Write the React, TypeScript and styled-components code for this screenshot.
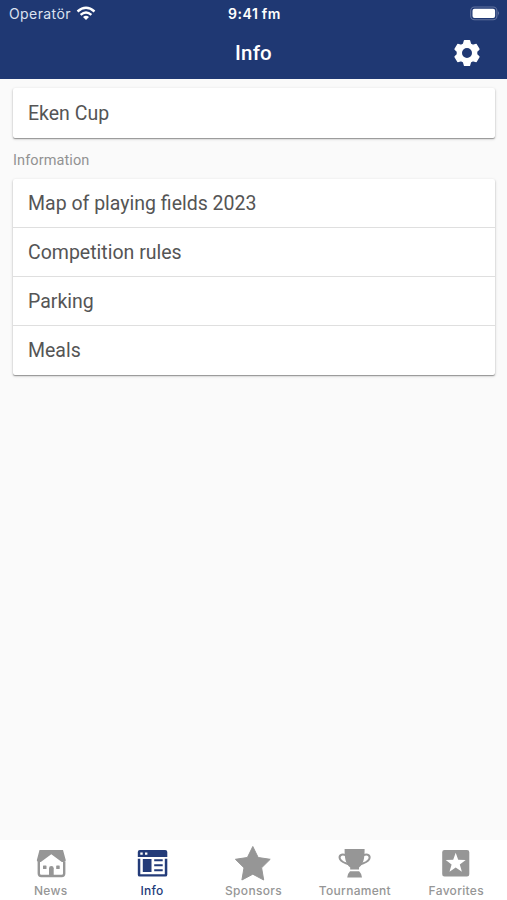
import React from "react";
import styled, { createGlobalStyle } from "styled-components";

const GlobalStyle = createGlobalStyle`
  * { box-sizing: border-box; }
  body { margin: 0; background: #fafafa; }
`;

const Screen = styled.div`
  width: 100%;
  height: 100vh;
  display: flex;
  flex-direction: column;
  background: #fafafa;
  font-family: Roboto, "Liberation Sans", sans-serif;
`;

const Header = styled.header`
  height: 79px;
  flex: none;
  background: #1f3873;
  color: #fff;
`;

const StatusBar = styled.div`
  height: 27px;
  padding: 0 7px 0 9px;
  display: grid;
  grid-template-columns: 1fr auto 1fr;
  align-items: center;
  font-family: Inter, sans-serif;
  font-size: 14px;
  line-height: 27px;
`;

const Carrier = styled.div`
  display: flex;
  align-items: center;
  gap: 5px;
  color: #dce2f0;
  letter-spacing: 0.4px;
`;

const Clock = styled.div`
  font-size: 14px;
  font-weight: 600;
  letter-spacing: 0.5px;
  word-spacing: -0.5px;
`;

const Battery = styled.svg`
  justify-self: end;
`;

const TitleBar = styled.div`
  height: 52px;
  padding: 0 26px;
  display: grid;
  grid-template-columns: 1fr auto 1fr;
  align-items: center;
`;

const Title = styled.h1`
  grid-column: 2;
  margin: 0;
  font-size: 20.5px;
  font-weight: 500;
  line-height: 50px;
  letter-spacing: 0.2px;
`;

const SettingsButton = styled.button`
  justify-self: end;
  display: flex;
  padding: 0;
  border: 0;
  background: none;
  color: #fff;
  margin-bottom: 1px;
`;

const Content = styled.main`
  flex: 1;
  padding: 9px 12px 0 13px;
`;

const Card = styled.section`
  background: #fff;
  border-radius: 2px;
  box-shadow: 0 1px 1px rgba(0, 0, 0, 0.3), 0 1px 3px rgba(0, 0, 0, 0.22);
`;

const Row = styled.div`
  height: 49px;
  padding: 0 15px;
  color: #555;
  font-size: 19.5px;
  line-height: 49px;
  border-bottom: 1px solid #dfdfdf;

  &:last-child {
    border-bottom: 0;
  }
`;

const LeadRow = styled(Row)`
  height: 50px;
  line-height: 51px;
`;

const SectionLabel = styled.h2`
  height: 41px;
  margin: 0;
  color: #929292;
  font-size: 14.5px;
  font-weight: 400;
  line-height: 45px;
  letter-spacing: 0.1px;
`;

const TabBar = styled.nav`
  height: 60px;
  flex: none;
  display: grid;
  grid-template-columns: repeat(5, 1fr);
  background: #fff;
`;

const Tab = styled.div<{ $active?: boolean }>`
  display: flex;
  flex-direction: column;
  align-items: center;
  padding-top: 4px;
  color: ${(p) => (p.$active ? "#233b79" : "#969696")};
`;

const TabLabel = styled.span`
  font-family: Inter, sans-serif;
  font-size: 12px;
  font-weight: 500;
  line-height: 18px;
  letter-spacing: 0.3px;
`;

const WifiIcon = () => (
  <svg width="20" height="15" viewBox="0 0 20 15" fill="none" stroke="#fff" strokeWidth="2.4">
    <path d="M1.5 5.5Q10 -1.8 18.5 5.5" />
    <path d="M4.6 8.8Q10 4.2 15.4 8.8" />
    <path d="M10 14L7 11Q10 8.6 13 11Z" fill="#fff" stroke="none" />
  </svg>
);

const BatteryIcon = () => (
  <Battery width="30" height="15" viewBox="0 0 30 15">
    <rect x="0.7" y="1" width="26.2" height="12.8" rx="3.8" fill="none" stroke="#63739f" strokeWidth="1.1" />
    <rect x="2.5" y="2.8" width="22.6" height="9.2" rx="2" fill="#fff" />
    <path d="M28 5.1Q29.7 7.4 28 9.7Z" fill="#8593b9" />
  </Battery>
);

const GearIcon = () => (
  <svg width="28" height="28" viewBox="0 0 28 28">
    <path
      fill="currentColor"
      fillRule="evenodd"
      stroke="currentColor"
      strokeWidth="1.4"
      strokeLinejoin="round"
      d="M11.5 1.8H16.5L17.4 5L19.8 6.4L23.2 5.5L25.9 10.2L23.6 12.6V15.4L25.9 17.8L23.2 22.5L19.8 21.6L17.4 23L16.5 26.2H11.5L10.6 23L8.2 21.6L4.8 22.5L2.1 17.8L4.4 15.4V12.6L2.1 10.2L4.8 5.5L8.2 6.4L10.6 5ZM14 8.3A5.7 5.7 0 1 0 14 19.7A5.7 5.7 0 1 0 14 8.3Z"
    />
  </svg>
);

const TabSvg = ({ children }: { children: React.ReactNode }) => (
  <svg width="40" height="38" viewBox="0 0 40 38" fill="currentColor">
    {children}
  </svg>
);

const HouseIcon = () => (
  <TabSvg>
    <path d="M8.5 6H32L34.8 16.3Q34.7 18 33 18H30.8L20.3 10.2L9.8 18H7.5Q5.8 18 5.8 16.3Z" />
    <path d="M7.8 17.7V29.5Q7.8 32 10.3 32H30.7Q33.2 32 33.2 29.5V17.7" fill="none" stroke="currentColor" strokeWidth="2.4" />
    <path d="M18 32V24.3Q18 22 20.3 22Q22.7 22 22.7 24.3V32Z" />
    <rect x="12" y="21.5" width="3.5" height="3.5" rx="0.6" />
    <rect x="25.2" y="21.5" width="3.5" height="3.5" rx="0.6" />
  </TabSvg>
);

const PageIcon = () => (
  <TabSvg>
    <path
      fillRule="evenodd"
      d="M7.8 6H33.2Q35.3 6 35.3 8V13H5.8V8Q5.8 6 7.8 6ZM8.3 8.5V10.7H10.7V8.5ZM13 8.5V10.7H15.4V8.5Z"
    />
    <path fillRule="evenodd" d="M5.8 14.8H35.3V30.7Q35.3 32.6 33.4 32.6H7.7Q5.8 32.6 5.8 30.7ZM8.3 14.8V30.2H32.8V14.8Z" />
    <path d="M10.8 15H19.5V28H10.8ZM22.2 15.2H30.7V17.3H22.2ZM22.2 20.2H30.7V22.3H22.2ZM22.2 25.2H30.7V27.3H22.2Z" />
  </TabSvg>
);

const StarIcon = () => (
  <TabSvg>
    <path
      d="M19.8 2.5L25.2 13.5L37.2 15.3L28.6 23.8L30.7 36L19.8 30.2L8.9 36L11 23.8L2.4 15.3L14.4 13.5Z"
      stroke="currentColor"
      strokeLinejoin="round"
    />
  </TabSvg>
);

const TrophyIcon = () => (
  <TabSvg>
    <path d="M9.6 5H29.6C29.6 14 28.8 19.6 24 23.5V25.6H15.2V23.5C10.4 19.6 9.6 14 9.6 5Z" />
    <path
      d="M10.5 11C5.8 9.6 3.6 12 5 15.2C6.4 18.3 10.4 19.5 15 20.8M28.7 11C33.4 9.6 35.6 12 34.2 15.2C32.8 18.3 28.8 19.5 24.2 20.8"
      fill="none"
      stroke="currentColor"
      strokeWidth="2"
    />
    <path d="M15 27.2H24.2Q26.2 29 27 33.4H12.2Q13 29 15 27.2Z" />
  </TabSvg>
);

const FavoriteIcon = () => (
  <TabSvg>
    <path
      fillRule="evenodd"
      d="M8.5 6H31Q33.3 6 33.3 8.3V30.2Q33.3 32.5 31 32.5H8.5Q6.2 32.5 6.2 30.2V8.3Q6.2 6 8.5 6ZM19.7 8.7L17.2 15.8L9.7 16L15.6 20.6L13.5 27.8L19.7 23.6L25.9 27.8L23.8 20.6L29.7 16L22.2 15.8Z"
    />
  </TabSvg>
);

const tabs = [
  { label: "News", icon: <HouseIcon /> },
  { label: "Info", icon: <PageIcon />, active: true },
  { label: "Sponsors", icon: <StarIcon /> },
  { label: "Tournament", icon: <TrophyIcon /> },
  { label: "Favorites", icon: <FavoriteIcon /> },
];

const topics = ["Map of playing fields 2023", "Competition rules", "Parking", "Meals"];

export default function App() {
  return (
    <Screen>
      <GlobalStyle />
      <Header>
        <StatusBar>
          <Carrier>
            Operatör
            <WifiIcon />
          </Carrier>
          <Clock>9:41 fm</Clock>
          <BatteryIcon />
        </StatusBar>
        <TitleBar>
          <Title>Info</Title>
          <SettingsButton aria-label="Settings">
            <GearIcon />
          </SettingsButton>
        </TitleBar>
      </Header>
      <Content>
        <Card>
          <LeadRow>Eken Cup</LeadRow>
        </Card>
        <SectionLabel>Information</SectionLabel>
        <Card>
          {topics.map((topic) => (
            <Row key={topic}>{topic}</Row>
          ))}
        </Card>
      </Content>
      <TabBar>
        {tabs.map((tab) => (
          <Tab key={tab.label} $active={tab.active}>
            {tab.icon}
            <TabLabel>{tab.label}</TabLabel>
          </Tab>
        ))}
      </TabBar>
    </Screen>
  );
}
